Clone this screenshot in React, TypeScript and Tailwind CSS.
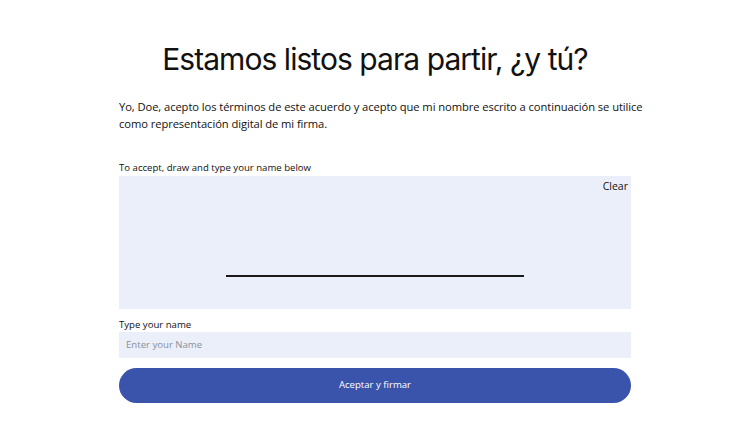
import React from "react";

export default function App() {
  return (
    <div className="w-[750px] h-[446px] bg-white flex flex-col items-center" style={{ fontFamily: '"Open Sans", sans-serif' }}>
      <h1 className="mt-[39px] text-[30px] leading-[40px] text-[#111] tracking-[-0.95px]" style={{ fontFamily: 'Inter, sans-serif' }}>
        Estamos listos para partir, ¿y tú?
      </h1>
      <div className="w-[512px] mt-[19px]">
        <p className="w-[528px] text-[11.2px] leading-[17px] text-[#111] tracking-[-0.08px]">
          Yo, Doe, acepto los términos de este acuerdo y acepto que mi nombre escrito a continuación se utilice como representación digital de mi firma.
        </p>
        <div className="mt-[29px] text-[9.6px] leading-[14px] text-[#111]">To accept, draw and type your name below</div>
        <div className="mt-[1px] h-[133px] bg-[#ebeffa] flex flex-col">
          <div className="flex justify-end pr-[3px] pt-[2px] text-[10.5px] leading-[17px] text-[#111]">Clear</div>
          <div className="flex justify-center mt-[80px]">
            <div className="w-[298px] h-[2px] bg-[#1a1a1a]" />
          </div>
        </div>
        <div className="mt-[9px] text-[9.6px] leading-[14px] text-[#111]">Type your name</div>
        <div className="h-[26px] bg-[#ebeffa] flex items-center pl-[7px] text-[9.6px] text-[#8a8f99]">
          Enter your Name
        </div>
        <button className="mt-[10px] w-full h-[35px] rounded-full bg-[#3a53ab] text-white text-[9.6px] flex items-center justify-center" style={{ fontFamily: '"Open Sans", sans-serif' }}>
          Aceptar y firmar
        </button>
      </div>
    </div>
  );
}
